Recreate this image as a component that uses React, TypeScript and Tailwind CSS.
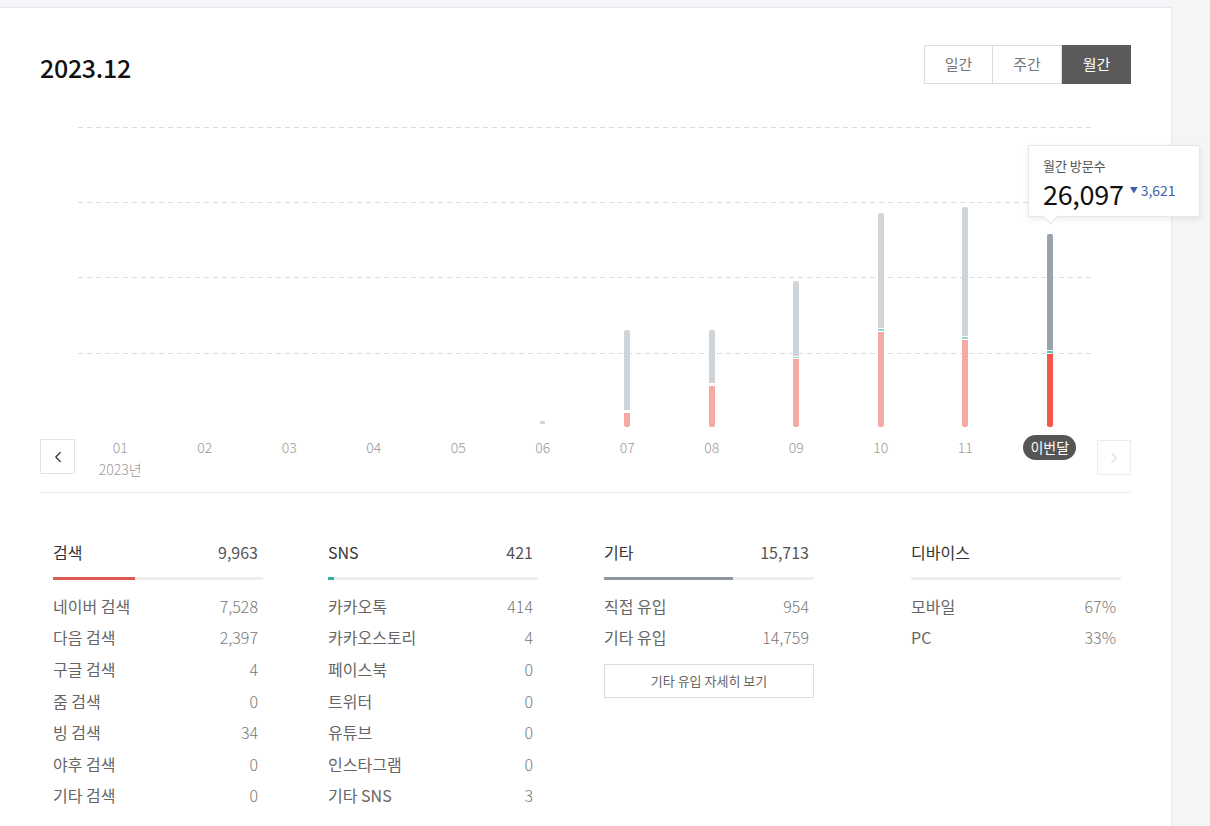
import { ChevronLeft, ChevronRight } from "lucide-react";

type Bar = { label: string; gray: number; teal: number; red: number; current?: boolean };

const bars: Bar[] = [
  { label: "01", gray: 0, teal: 0, red: 0 },
  { label: "02", gray: 0, teal: 0, red: 0 },
  { label: "03", gray: 0, teal: 0, red: 0 },
  { label: "04", gray: 0, teal: 0, red: 0 },
  { label: "05", gray: 0, teal: 0, red: 0 },
  { label: "06", gray: 3, teal: 0, red: 0 },
  { label: "07", gray: 80, teal: 0, red: 14 },
  { label: "08", gray: 53, teal: 0, red: 41 },
  { label: "09", gray: 75, teal: 1, red: 68 },
  { label: "10", gray: 115, teal: 2, red: 95 },
  { label: "11", gray: 129, teal: 2, red: 87 },
  { label: "이번달", gray: 116, teal: 2, red: 73, current: true },
];

type Stat = { title: string; total?: string; fill: number; color: string; rows: [string, string][]; more?: boolean };

const stats: Stat[] = [
  {
    title: "검색",
    total: "9,963",
    fill: 82,
    color: "bg-[#dc5a4f]",
    rows: [
      ["네이버 검색", "7,528"],
      ["다음 검색", "2,397"],
      ["구글 검색", "4"],
      ["줌 검색", "0"],
      ["빙 검색", "34"],
      ["야후 검색", "0"],
      ["기타 검색", "0"],
    ],
  },
  {
    title: "SNS",
    total: "421",
    fill: 6,
    color: "bg-[#2db39f]",
    rows: [
      ["카카오톡", "414"],
      ["카카오스토리", "4"],
      ["페이스북", "0"],
      ["트위터", "0"],
      ["유튜브", "0"],
      ["인스타그램", "0"],
      ["기타 SNS", "3"],
    ],
  },
  {
    title: "기타",
    total: "15,713",
    fill: 129,
    color: "bg-[#8f969d]",
    rows: [
      ["직접 유입", "954"],
      ["기타 유입", "14,759"],
    ],
    more: true,
  },
  {
    title: "디바이스",
    fill: 0,
    color: "bg-[#8f969d]",
    rows: [
      ["모바일", "67%"],
      ["PC", "33%"],
    ],
  },
];

const font = "font-['Noto_Sans_CJK_KR','Noto_Sans',sans-serif]";

function GridLine() {
  return <div className="h-px w-full bg-[linear-gradient(to_right,#dcdcdc_55%,transparent_55%)] bg-[length:9px_1px]" />;
}

function BarColumn({ bar }: { bar: Bar }) {
  if (bar.gray === 0 && bar.red === 0) return <div />;
  if (bar.red === 0) {
    return (
      <div className="flex justify-center items-end pb-[3px]">
        <div className="w-[5px] h-[3px] bg-[#cfd4d9] rounded-[1px]" />
      </div>
    );
  }
  const gray = bar.current ? "bg-[#9aa3ac]" : "bg-[#cfd4d9]";
  const red = bar.current ? "bg-[#f3574a]" : "bg-[#f4aaa2]";
  const teal = bar.current ? "bg-[#56c2b2]" : "bg-[#8fd6cc]";
  return (
    <div className="flex justify-center items-end">
      <div className="flex flex-col w-[6px] gap-[1px]">
        <div className={`${gray} rounded-t-[2px]`} style={{ height: bar.gray }} />
        {bar.teal > 0 ? (
          <div className={teal} style={{ height: bar.teal }} />
        ) : (
          <div className="h-[1px]" />
        )}
        <div className={`${red} rounded-b-[2px]`} style={{ height: bar.red }} />
      </div>
    </div>
  );
}

function StatColumn({ stat, className }: { stat: Stat; className: string }) {
  return (
    <div className={`w-[210px] ${className}`}>
      <div className="flex justify-between items-center h-[24px] pr-[5px]">
        <span className="text-[16px] text-[#333]">{stat.title}</span>
        <span className="text-[16px] text-[#555]">{stat.total}</span>
      </div>
      <div className="mt-[13px] h-[3px] bg-[#eeeeee] flex">
        <div className={stat.color} style={{ width: stat.fill }} />
      </div>
      <div className="mt-[10px]">
        {stat.rows.map(([k, v]) => (
          <div key={k} className="flex justify-between items-center h-[31.6px] pr-[5px] text-[16px]">
            <span className="text-[#666]">{k}</span>
            <span className="text-[#777] font-light">{v}</span>
          </div>
        ))}
      </div>
      {stat.more && (
        <button className="mt-[11px] w-full h-[34px] border border-[#dcdcdc] text-[13px] text-[#666] bg-white">
          기타 유입 자세히 보기
        </button>
      )}
    </div>
  );
}

export default function App() {
  return (
    <div className={`min-h-screen bg-[#f4f5f7] pt-[7px] ${font}`}>
      <div className="w-[1172px] min-h-[819px] bg-white border-t border-r border-[#e6e8eb] px-[40px] pt-[37px]">
        {/* Header */}
        <div className="flex justify-between items-start">
          <h1 className="text-[25px] leading-[30px] mt-[7px] text-[#111] font-medium tracking-[-0.3px]">
            2023.12
          </h1>
          <div className="flex h-[39px] text-[15px]">
            <button className="w-[69px] border border-[#dcdcdc] text-[#777] bg-white">일간</button>
            <button className="w-[69px] border border-l-0 border-[#dcdcdc] text-[#777] bg-white">주간</button>
            <button className="w-[69px] bg-[#5a5a5a] text-white">월간</button>
          </div>
        </div>

        {/* Chart */}
        <div className="relative ml-[38px] mr-[39px] mt-[43px] h-[300px]">
          <div className="absolute inset-0 flex flex-col">
            <div className="h-[75px]"><GridLine /></div>
            <div className="h-[75px]"><GridLine /></div>
            <div className="h-[76px]"><GridLine /></div>
            <div className="h-[74px]"><GridLine /></div>
          </div>
          <div className="absolute inset-0 grid grid-cols-12">
            {bars.map((b) => (
              <BarColumn key={b.label} bar={b} />
            ))}
          </div>
          {/* Tooltip */}
          <div className="absolute left-[950px] top-[18px] w-[172px] h-[72px] bg-white border border-[#e6e6e6] shadow-[0_2px_6px_rgba(0,0,0,0.08)] pl-[14px] pt-[12px]">
            <div className="text-[13px] leading-[16px] text-[#555]">월간 방문수</div>
            <div className="flex items-start mt-[6px]">
              <span className="text-[27px] leading-[28px] text-[#111] tracking-[-0.3px]">26,097</span>
              <span className="ml-[6px] mt-[1px] flex items-center text-[14px] leading-[18px] text-[#3d5ea8]">
                <span className="text-[8px] mr-[3px]">▼</span>3,621
              </span>
            </div>
            <div className="absolute left-[16px] -bottom-[6px] w-[11px] h-[11px] bg-white border-r border-b border-[#e6e6e6] rotate-45" />
          </div>
        </div>

        {/* X axis */}
        <div className="flex items-start mt-[12px]">
          <button className="w-[35px] h-[35px] border border-[#e3e3e3] flex items-center justify-center text-[#333]">
            <ChevronLeft size={18} strokeWidth={1.6} />
          </button>
          <div className="ml-[3px] w-[1014px] grid grid-cols-12 text-[14px] text-[#999] font-light">
            {bars.map((b, i) => (
              <div key={b.label} className="flex flex-col items-center">
                {b.current ? (
                  <span className="-mt-[4px] h-[25px] px-[7px] rounded-full bg-[#555] text-white text-[14px] font-normal flex items-center">
                    {b.label}
                  </span>
                ) : (
                  <span className="leading-[17px]">{b.label}</span>
                )}
                {i === 0 && <span className="mt-[5px] leading-[17px]">2023년</span>}
              </div>
            ))}
          </div>
          <button className="ml-[5px] w-[34px] h-[35px] mt-[1px] border border-[#ececec] flex items-center justify-center text-[#d0d0d0]">
            <ChevronRight size={18} strokeWidth={1.4} />
          </button>
        </div>

        <div className="mt-[14px] border-t border-[#ececec]" />

        {/* Stats */}
        <div className="flex pt-[47px] pl-[13px] pb-[20px]">
          <StatColumn stat={stats[0]} className="" />
          <StatColumn stat={stats[1]} className="ml-[65px]" />
          <StatColumn stat={stats[2]} className="ml-[66px]" />
          <StatColumn stat={stats[3]} className="ml-[97px]" />
        </div>
      </div>
    </div>
  );
}
